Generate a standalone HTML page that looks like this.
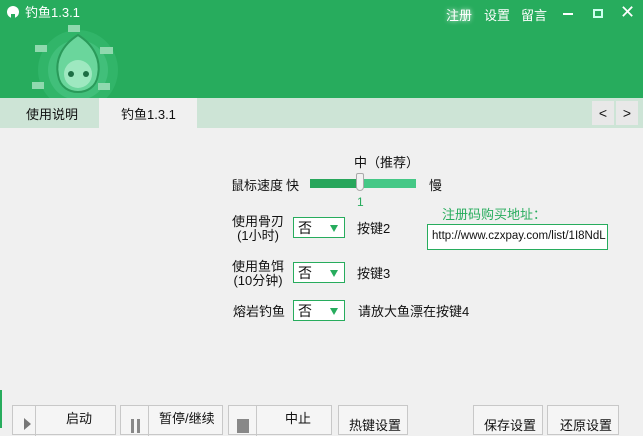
<!DOCTYPE html>
<html><head><meta charset="utf-8"><style>
*{margin:0;padding:0;box-sizing:border-box}
body{width:643px;height:428px;overflow:hidden;background:#f0f0f0;font-family:"Liberation Sans","Noto Sans CJK SC",sans-serif;font-size:12px;color:#111;position:relative}
.a{position:absolute}
.hdr{left:0;top:0;width:643px;height:98px;background:#27ac5d}
.tabs{left:0;top:98px;width:643px;height:30px;background:#cde4d6}
.sel{border:1px solid #27ac5d;background:#fff;height:21px;width:52px}
.sel span{position:absolute;left:4px;top:0px;font-size:14px}
.sel i{position:absolute;right:6px;top:7px;border-left:4px solid transparent;border-right:4px solid transparent;border-top:7px solid #27ac5d}
.btn{border:1px solid #c8c8c8;background:#f5f5f5;height:30px;top:405px}
.btn span{position:absolute;top:2px;font-size:13px}
</style></head><body>
<div class="a hdr"></div>
<svg class="a" style="left:0;top:0" width="220" height="98">
<circle cx="13" cy="12" r="6" fill="#fff"/><rect x="11" y="14" width="4" height="6" fill="#27ac5d"/>
<circle cx="78" cy="70" r="40" fill="#3bbd75" opacity=".5"/>
<circle cx="78" cy="70" r="30" fill="#4dc686" opacity=".6"/>
<path d="M78 35 C62 45 55 60 58 75 C60 88 70 92 78 92 C86 92 96 88 98 75 C101 60 94 45 78 35Z" fill="#6ad69c" stroke="#2a9a5a" stroke-width="2"/>
<ellipse cx="78" cy="74" rx="14" ry="14" fill="#9ee8c0"/>
<circle cx="71" cy="74" r="3" fill="#1d6e44"/><circle cx="86" cy="74" r="3" fill="#1d6e44"/>
<rect x="68" y="25" width="12" height="7" fill="#8fd9ae"/><rect x="35" y="45" width="12" height="7" fill="#8fd9ae"/><rect x="100" y="47" width="13" height="7" fill="#8fd9ae"/><rect x="32" y="82" width="12" height="7" fill="#8fd9ae"/><rect x="98" y="83" width="12" height="7" fill="#8fd9ae"/>
<text x="25" y="17" fill="#fff" font-size="13" font-family="Liberation Sans,Noto Sans CJK SC,sans-serif">钓鱼1.3.1</text>
</svg>
<div class="a" style="left:446px;top:5px;color:#fff;font-size:13px;text-shadow:0 0 5px #fff">注册</div>
<div class="a" style="left:484px;top:5px;color:#fff;font-size:13px">设置</div>
<div class="a" style="left:521px;top:5px;color:#fff;font-size:13px">留言</div>
<div class="a" style="left:563px;top:13px;width:10px;height:2px;background:#fff"></div>
<div class="a" style="left:593px;top:9px;width:10px;height:9px;border:2px solid #cfe"></div>
<div class="a" style="left:620px;top:2px;color:#fff;font-size:18px">✕</div>
<div class="a tabs"></div>
<div class="a" style="left:99px;top:98px;width:98px;height:30px;background:#f0f0f0"></div>
<div class="a" style="left:26px;top:104px;font-size:13px">使用说明</div>
<div class="a" style="left:121px;top:104px;font-size:13px">钓鱼1.3.1</div>
<div class="a" style="left:592px;top:101px;width:22px;height:24px;background:#e8e8e8;text-align:center;line-height:24px;font-size:14px">&lt;</div>
<div class="a" style="left:616px;top:101px;width:22px;height:24px;background:#e8e8e8;text-align:center;line-height:24px;font-size:14px">&gt;</div>
<div class="a" style="left:354px;top:152px;font-size:13px">中（推荐）</div>
<div class="a" style="left:231px;top:175px;font-size:13px">鼠标速度</div>
<div class="a" style="left:286px;top:175px;font-size:13px">快</div>
<div class="a" style="left:310px;top:179px;width:50px;height:9px;background:#27a65b"></div>
<div class="a" style="left:360px;top:179px;width:56px;height:9px;background:#45c886"></div>
<div class="a" style="left:356px;top:173px;width:8px;height:18px;background:#f2f2f2;border:1px solid #aaa;border-radius:2px 2px 4px 4px"></div>
<div class="a" style="left:429px;top:175px;font-size:13px">慢</div>
<div class="a" style="left:357px;top:195px;color:#27ac5d">1</div>
<div class="a" style="left:232px;top:215px;font-size:13px;line-height:14px;text-align:center">使用骨刃<br>(1小时)</div>
<div class="a sel" style="left:293px;top:217px"><span>否</span><i></i></div>
<div class="a" style="left:357px;top:218px;font-size:13px">按键2</div>
<div class="a" style="left:232px;top:260px;font-size:13px;line-height:14px;text-align:center">使用鱼饵<br>(10分钟)</div>
<div class="a sel" style="left:293px;top:262px"><span>否</span><i></i></div>
<div class="a" style="left:357px;top:263px;font-size:13px">按键3</div>
<div class="a" style="left:233px;top:301px;font-size:13px">熔岩钓鱼</div>
<div class="a sel" style="left:293px;top:300px"><span>否</span><i></i></div>
<div class="a" style="left:358px;top:301px;font-size:13px">请放大鱼漂在按键4</div>
<div class="a" style="left:442px;top:204px;font-size:13px;color:#27ac5d">注册码购买地址：</div>
<div class="a" style="left:427px;top:224px;width:181px;height:26px;border:1px solid #27ac5d;background:#fff;padding:5px 0 0 4px;font-size:11.5px;white-space:nowrap;overflow:hidden">http://www.czxpay.com/list/1I8NdL</div>
<div class="a" style="left:0;top:390px;width:2px;height:38px;background:#27ac5d"></div>
<div class="a btn" style="left:12px;width:104px"><div class="a" style="left:0;top:0;width:23px;height:30px;border-right:1px solid #c8c8c8"></div><div class="a" style="left:11px;top:12px;border-top:6px solid transparent;border-bottom:6px solid transparent;border-left:7px solid #777"></div><span style="left:53px">启动</span></div>
<div class="a btn" style="left:120px;width:103px"><div class="a" style="left:0;top:0;width:28px;height:30px;border-right:1px solid #c8c8c8"></div><div class="a" style="left:10px;top:13px;width:3px;height:14px;background:#888"></div><div class="a" style="left:16px;top:13px;width:3px;height:14px;background:#888"></div><span style="left:38px">暂停/继续</span></div>
<div class="a btn" style="left:228px;width:104px"><div class="a" style="left:0;top:0;width:28px;height:30px;border-right:1px solid #c8c8c8"></div><div class="a" style="left:8px;top:13px;width:12px;height:14px;background:#888"></div><span style="left:56px">中止</span></div>
<div class="a btn" style="left:338px;width:70px"><span style="left:10px;top:9px">热键设置</span></div>
<div class="a btn" style="left:473px;width:70px"><span style="left:10px;top:9px">保存设置</span></div>
<div class="a btn" style="left:547px;width:72px"><span style="left:12px;top:9px">还原设置</span></div>
</body></html>
